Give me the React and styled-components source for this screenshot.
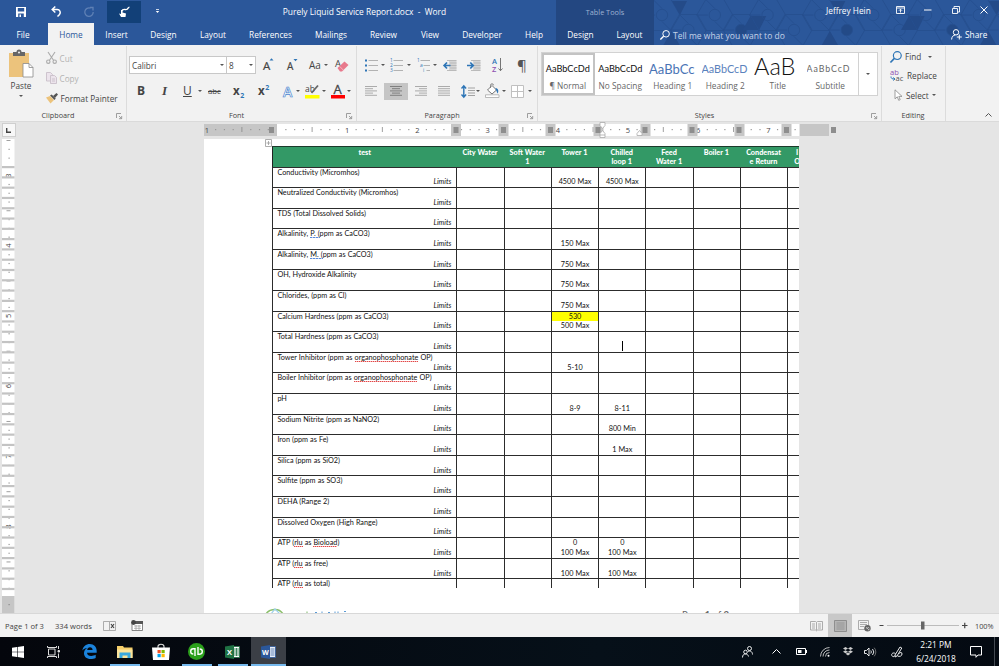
import styled, { createGlobalStyle, css } from 'styled-components';

const uiFont = '"Open Sans", "Noto Sans", sans-serif';
const docFont = 'Lato, "Open Sans", sans-serif';
const wordBlue = '#2b579a';
const contextBlue = '#234781';
const ribbonGray = '#f2f2f2';
const canvasGray = '#e5e5e5';
const iconGray = '#555';
const accentBlue = '#2e75b6';

const GlobalStyle = createGlobalStyle`
  * { box-sizing: border-box; }
  body {
    margin: 0;
    overflow: hidden;
    font-family: ${uiFont};
    font-size: 8.2px;
  }
  svg { display: block; flex: none; overflow: visible; }
`;

/* ---------- data ---------- */

const tabs = [
  { name: 'File', w: 46 },
  { name: 'Home', w: 46, active: true, gap: 2 },
  { name: 'Insert', w: 45 },
  { name: 'Design', w: 49 },
  { name: 'Layout', w: 50 },
  { name: 'References', w: 65 },
  { name: 'Mailings', w: 56 },
  { name: 'Review', w: 49 },
  { name: 'View', w: 44 },
  { name: 'Developer', w: 60 },
  { name: 'Help', w: 44 },
];

const columns = [
  ['test'],
  ['City Water'],
  ['Soft Water', '1'],
  ['Tower 1'],
  ['Chilled', 'loop 1'],
  ['Feed', 'Water 1'],
  ['Boiler 1'],
  ['Condensat', 'e Return'],
];

// tower / chilled hold [reading, limit]
const rows = [
  { name: 'Conductivity (Micromhos)', tower: ['', '4500 Max'], chilled: ['', '4500 Max'] },
  { name: 'Neutralized Conductivity (Micromhos)' },
  { name: 'TDS (Total Dissolved Solids)' },
  { name: ['Alkalinity, ', 'P. (', 'ppm as CaCO3)'], grammar: true, tower: ['', '150 Max'] },
  { name: ['Alkalinity, ', 'M. (', 'ppm as CaCO3)'], grammar: true, tower: ['', '750 Max'] },
  { name: 'OH, Hydroxide Alkalinity', tower: ['', '750 Max'] },
  { name: 'Chlorides, (ppm as Cl)', tower: ['', '750 Max'] },
  { name: 'Calcium Hardness (ppm as CaCO3)', tower: ['530', '500 Max'], alert: true },
  { name: 'Total Hardness (ppm as CaCO3)', cursor: true },
  { name: ['Tower Inhibitor (ppm as ', 'organophosphonate', ' OP)'], tower: ['', '5-10'] },
  { name: ['Boiler Inhibitor (ppm as ', 'organophosphonate', ' OP)'] },
  { name: 'pH', tower: ['', '8-9'], chilled: ['', '8-11'] },
  { name: 'Sodium Nitrite (ppm as NaNO2)', chilled: ['', '800 Min'] },
  { name: 'Iron (ppm as Fe)', chilled: ['', '1 Max'] },
  { name: 'Silica (ppm as SiO2)' },
  { name: 'Sulfite (ppm as SO3)' },
  { name: 'DEHA (Range 2)' },
  { name: 'Dissolved Oxygen (High Range)' },
  { name: ['ATP (', 'rlu', ' as ', 'Bioload', ')'], tower: ['0', '100 Max'], chilled: ['0', '100 Max'] },
  { name: ['ATP (', 'rlu', ' as free)'], tower: ['', '100 Max'], chilled: ['', '100 Max'] },
  { name: ['ATP (', 'rlu', ' as total)'], last: true },
];

/* ---------- title bar ---------- */

const Screen = styled.div`
  display: flex;
  flex-direction: column;
  width: 999px;
  height: 666px;
  overflow: hidden;
  background: ${canvasGray};
`;

const Header = styled.header`
  position: relative;
  height: 45px;
  background: ${wordBlue};
  color: #fff;
`;

const Pattern = styled.svg`
  position: absolute;
  top: 0;
  right: 0;
`;

const HeaderRow = styled.div`
  position: relative;
  display: flex;
  align-items: center;
  height: ${p => p.$h}px;
`;

const QuickButton = styled.div`
  display: flex;
  align-items: center;
  justify-content: center;
  width: ${p => p.$w}px;
  height: 22px;
  background: ${p => (p.$on ? '#124078' : 'transparent')};
`;

const DocTitle = styled.div`
  width: 383px;
  text-align: center;
  font-size: 8.42px;
  white-space: pre;
`;

const ContextTitle = styled.div`
  width: 98px;
  height: 23px;
  line-height: 24px;
  background: ${contextBlue};
  color: #9fb3d3;
  text-align: center;
  font-size: 7.3px;
`;

const UserName = styled.div`
  width: 232px;
  padding: 0 0 2px 172px;
  font-size: 8.3px;
  white-space: nowrap;
`;

const WindowButton = styled.div`
  display: flex;
  justify-content: center;
  width: 28px;
  padding-bottom: 3px;
`;

const Tab = styled.div`
  width: ${p => p.$w}px;
  height: 22px;
  margin-left: ${p => p.$gap || 0}px;
  line-height: 23px;
  text-align: center;
  white-space: nowrap;
  font-size: 8.3px;
  background: ${p => (p.$active ? ribbonGray : p.$context ? contextBlue : 'transparent')};
  color: ${p => (p.$active ? wordBlue : '#fff')};
`;

const TellMe = styled.div`
  display: flex;
  align-items: center;
  gap: 3px;
  width: 290px;
  padding: 2px 0 0 6px;
  color: #c5d2e8;
  font-size: 8.5px;
`;

const Share = styled.div`
  display: flex;
  align-items: center;
  gap: 3px;
  padding-left: 7px;
  font-size: 8.3px;
`;

/* ---------- ribbon ---------- */

const Ribbon = styled.div`
  display: flex;
  height: 77px;
  background: ${ribbonGray};
  border-bottom: 1px solid #dadada;
  color: #444;
`;

const Group = styled.section`
  display: flex;
  flex-direction: column;
  width: ${p => p.$w}px;
  height: 75px;
  margin-top: 1px;
  border-right: 1px solid #dcdcdc;
`;

const GroupBody = styled.div`
  flex: 1;
  padding: 8px 0 0 ${p => p.$left}px;
`;

const GroupLabel = styled.div`
  display: grid;
  grid-template-columns: 1fr 10px;
  height: 12px;
  line-height: 13px;
  padding-left: ${p => p.$left ?? 10}px;
  text-align: center;
  font-size: 7.25px;
  color: #444;
`;

const IconRow = styled.div`
  display: flex;
  align-items: center;
  height: 22px;
  margin-bottom: 4px;
`;

const Slot = styled.div`
  display: flex;
  align-items: center;
  flex: none;
  width: ${p => p.$w}px;
`;

const Glyph = styled.span`
  font-size: ${p => p.$size || 12}px;
  line-height: 14px;
  color: ${p => p.$color || '#444'};
  font-weight: ${p => (p.$bold ? 700 : 400)};
  font-style: ${p => (p.$italic ? 'italic' : 'normal')};
  font-family: ${p => (p.$serif ? '"Liberation Serif", serif' : uiFont)};
  text-decoration: ${p => p.$line || 'none'};

  sub, sup {
    margin-left: 0.5px;
    font-size: 7px;
    line-height: 0;
    color: ${accentBlue};
  }
`;

const Caret = styled.i`
  flex: none;
  border: 2px solid transparent;
  border-top: 2.4px solid #555;
  border-bottom: 0;
`;

const Combo = styled.div`
  display: flex;
  align-items: center;
  justify-content: space-between;
  width: ${p => p.$w}px;
  height: 18px;
  margin-right: ${p => p.$mr || 0}px;
  padding: 0 2px 0 2px;
  border: 1px solid #c8c8c8;
  background: #fff;
  color: #444;
`;

const ClipboardBody = styled.div`
  display: flex;
  flex: 1;
  padding-top: 3px;
`;

const PasteButton = styled.div`
  display: flex;
  flex-direction: column;
  align-items: center;
  width: 42px;
  padding-top: 1px;
  gap: 2px;

  span { margin-bottom: 2px; }
`;

const ClipList = styled.div`
  display: flex;
  flex-direction: column;
  margin-top: -1px;
  padding-left: 4px;
`;

const ClipItem = styled.div`
  display: flex;
  align-items: center;
  gap: 2.5px;
  height: 20px;
  white-space: nowrap;
  color: ${p => (p.$off ? '#b3b3b3' : '#444')};
`;

const SelectedButton = styled.div`
  display: flex;
  align-items: center;
  justify-content: center;
  flex: none;
  width: 24px;
  height: 17px;
  margin-right: 7px;
  background: #c5c5c5;
`;

const Gallery = styled.div`
  display: flex;
  width: 337px;
  height: 44px;
  margin-top: -2px;
  border: 1px solid #d2d2d2;
  background: #fff;
`;

const StyleTile = styled.div`
  display: flex;
  flex-direction: column;
  width: 52.5px;
  height: 42px;
  overflow: hidden;
  text-align: center;
  white-space: nowrap;
  color: #666;
  box-shadow: ${p => (p.$selected ? 'inset 0 0 0 2px #c3c3c3' : 'none')};

  span {
    height: 24px;
    margin: 3px 3px 0 2px;
    overflow: hidden;
    line-height: ${p => p.$lh || 26}px;
    font-size: ${p => p.$size}px;
    color: ${p => p.$color || '#111'};
    font-weight: ${p => p.$weight || 400};
    letter-spacing: ${p => p.$ls || 0}px;
    text-align: ${p => (p.$clip ? 'left' : 'center')};
    font-family: ${docFont};
  }

  em {
    margin-right: 1px;
    font-style: normal;
    font-size: 8.3px;
    line-height: 12px;
  }
`;

const GalleryMore = styled.div`
  display: flex;
  align-items: center;
  justify-content: center;
  margin-left: auto;
  width: 19px;
  border-left: 1px solid #d2d2d2;
`;

const EditItem = styled.div`
  display: flex;
  align-items: center;
  height: 19.3px;
  gap: 3px;
  white-space: nowrap;
`;

const RibbonEnd = styled.div`
  display: flex;
  flex: 1;
  align-items: flex-end;
  justify-content: flex-end;
  padding: 0 7px 4px 0;
`;

/* ---------- document ---------- */

const Workspace = styled.div`
  display: flex;
  height: 491px;
  padding-top: 1px;
`;

const SideRuler = styled.div`
  width: 204px;
`;

const TabSelector = styled.div`
  display: flex;
  align-items: center;
  justify-content: center;
  width: 14px;
  height: 14px;
  margin: 0 0 2px 1.5px;
  border: 1px solid #cfcfcf;
  background: #f7f7f7;
`;

const PageColumn = styled.div`
  display: flex;
  flex-direction: column;
`;

const Page = styled.main`
  position: relative;
  width: 595px;
  height: 474px;
  padding: 7px 0 0 68px;
  overflow: hidden;
  background: #fff;
  font-family: ${docFont};
`;

const MoveHandle = styled.svg`
  position: absolute;
  left: 61px;
  top: 0;
`;

const Table = styled.div`
  display: grid;
  grid-template-columns: 184.4px repeat(6, 47.25px) 47.25px 48px;
  grid-template-rows: 19.5px repeat(20, 20.6px) 9.5px;
  width: 563.15px;
  height: 442px;
  border-top: 1px solid #1c3a2b;
  color: #111;
  font-size: 7.25px;
  word-spacing: 0.2px;
`;

const HeadCell = styled.div`
  padding-top: 1px;
  background: #339966;
  border-left: ${p => (p.$first ? '1px solid #222' : 'none')};
  color: #fff;
  font-weight: 900;
  text-align: center;
  line-height: 9.3px;
  white-space: pre;
`;

const Cell = styled.div`
  display: flex;
  flex-direction: column;
  border-top: 1px solid #2c2c2c;
  border-left: 1px solid #2c2c2c;
  text-align: center;
  line-height: 10.2px;
  white-space: nowrap;
  overflow: hidden;

  > * {
    flex: none;
    height: 9.8px;
  }

  ${p => p.$name && css`
    padding: 0 5px 0 4.4px;
    text-align: left;
    white-space: pre;

    > em { text-align: right; }
  `}
`;

const Reading = styled.div`
  background: ${p => (p.$alert ? '#ff0' : 'transparent')};
`;

const Misspelt = styled.span`
  background: ${p =>
    p.$grammar
      ? 'repeating-linear-gradient(90deg, #5b8bd8 0 2px, #b9cdf0 2px 3px)'
      : 'repeating-linear-gradient(90deg, #e04848 0 1px, #f7b5b5 1px 2px)'} 0 100% / 100% 1px no-repeat;
`;

const TextCursor = styled.div`
  align-self: center;
  width: 1px;
  margin-top: -0.8px;
  background: #000;
`;

const PageFooter = styled.footer`
  position: absolute;
  left: 61px;
  right: 70px;
  bottom: -8px;
  display: flex;
  justify-content: space-between;
  height: 13px;
  color: #666;
  font-size: 9.5px;
  line-height: 13px;
`;

/* ---------- status bar and taskbar ---------- */

const StatusBar = styled.div`
  display: flex;
  align-items: center;
  height: 24px;
  padding-left: 5px;
  border-top: 1px solid #d8d8d8;
  background: ${ribbonGray};
  color: #444;
  font-size: 7.6px;
`;

const StatusItem = styled.div`
  display: flex;
  align-items: center;
  flex: none;
  width: ${p => p.$w}px;
  white-space: nowrap;
`;

const ViewButton = styled.div`
  display: flex;
  align-items: center;
  justify-content: center;
  flex: none;
  width: 24px;
  height: 23px;
  background: ${p => (p.$on ? '#c8c8c8' : 'transparent')};
`;

const Zoom = styled.div`
  display: flex;
  align-items: center;
  padding-left: 3px;

  span {
    margin-left: 7px;
    font-size: 7.3px;
  }
`;

const Taskbar = styled.div`
  display: flex;
  height: 29px;
  background: linear-gradient(90deg, #04060c, #061019 60%, #040a12);
  color: #fff;
`;

const TaskButton = styled.div`
  display: flex;
  align-items: center;
  justify-content: center;
  width: 35.8px;
  height: 29px;
  background: ${p => (p.$active ? '#3b3f46' : 'transparent')};
  box-shadow: ${p => (p.$open ? 'inset 0 -2px 0 #76b9ed' : 'none')};
  background-clip: content-box;
  border: solid transparent;
  border-width: 0 ${p => (p.$active ? 0 : 3)}px;
`;

const Tray = styled.div`
  display: flex;
  align-items: center;
  margin-left: auto;
`;

const TrayItem = styled.div`
  display: flex;
  justify-content: center;
  width: ${p => p.$w}px;
`;

const Clock = styled.div`
  width: 52px;
  font-size: 8.4px;
  line-height: 13.3px;
  text-align: center;
`;

/* ---------- icons ---------- */

const Launcher = () => (
  <svg width="7" height="7" viewBox="0 0 7 7" fill="none" stroke="#888" style={{ marginTop: 4 }}>
    <path d="M.5 5V.5H5M3 3l2.500 2.500M5.700 3v2.700H3" strokeWidth=".8" />
  </svg>
);

const PasteIcon = () => (
  <svg width="26" height="28" viewBox="0 0 26 28">
    <path d="M1 3h20v24H1z" fill="#ecc37c" />
    <path d="M5 2h3.500a2.500 2.500 0 0 1 5 0H17v4H5z" fill="#666" />
    <circle cx="11" cy="2.600" r="1" fill="#f2f2f2" />
    <path d="M15 13.500h6l4 4V27H15z" fill="#fff" stroke="#8a8a8a" strokeWidth=".8" />
    <path d="M21 13.500v4h4" fill="none" stroke="#8a8a8a" strokeWidth=".8" />
  </svg>
);

const CutIcon = () => (
  <svg width="11" height="12" viewBox="0 0 11 12" fill="none" stroke="#aaa" strokeWidth="1.100">
    <path d="M2 0l5.500 8.200M9 0L3.500 8.200" />
    <circle cx="2.300" cy="9.700" r="1.700" />
    <circle cx="8.700" cy="9.700" r="1.700" />
  </svg>
);

const CopyIcon = () => (
  <svg width="11" height="12" viewBox="0 0 11 12" fill="#ece4ec" stroke="#c9bfca" strokeWidth=".9">
    <path d="M.5.5h4l2 2V9h-6z" />
    <path d="M4.500 3.500h4l2 2V11.500h-6z" />
    <path d="M6 7h3M6 9h3" />
  </svg>
);

const PainterIcon = () => (
  <svg width="12" height="11" viewBox="0 0 12 11">
    <path d="M0 4.500l4-1.500 4 4-3.500 3.500z" fill="#ecc37c" />
    <path d="M4 2.500l1.700-1 4 4-1.200 1.500z" fill="#555" />
    <path d="M7 3l3.500-3L12 1.500 9 5z" fill="#555" />
  </svg>
);

const EraserIcon = () => (
  <svg width="14" height="14" viewBox="0 0 14 14">
    <text x="0" y="9" fontSize="9.5" fill="#444">A</text>
    <path d="M2.500 10L9.500 3.500l4 3.500-6.500 6.500H5z" fill="#e8798c" />
    <path d="M4.500 8.200l4.200 4.300" stroke="#f7c4cc" strokeWidth=".8" />
  </svg>
);

const GrowIcon = ({ down }) => (
  <svg width="12" height="14" viewBox="0 0 12 14">
    <text x="0" y="12" fontSize={down ? 10 : 11.5} fill="#444" stroke="#444" strokeWidth=".2">A</text>
    <path d={down ? 'M6.500 1h4L8.500 3.200z' : 'M6.500 2.500h4L8.500.3z'} fill={accentBlue} />
  </svg>
);

const EffectIcon = () => (
  <svg width="12" height="13" viewBox="0 0 12 13">
    <text x="0" y="11.500" fontSize="14" fontWeight="600" fill="#fff" stroke="#4a86cf" strokeWidth=".7">A</text>
  </svg>
);

const HighlightIcon = () => (
  <svg width="15" height="15" viewBox="0 0 15 15">
    <text x="0" y="8" fontSize="8.500" fill="#444">ab</text>
    <path d="M13 1.500L6.500 9" stroke="#666" strokeWidth="1.800" />
    <path d="M0 11h14.500v3.500H0z" fill="#ff0" />
  </svg>
);

const FontColorIcon = () => (
  <svg width="13" height="15" viewBox="0 0 13 15">
    <text x="1.500" y="10" fontSize="13" fill="#444" stroke="#444" strokeWidth=".3">A</text>
    <path d="M-1 11h14v3.500H-1z" fill="red" />
  </svg>
);

const ListIcon = ({ kind }) => (
  <svg width="13" height="13" viewBox="0 0 13 13">
    {[1.500, 6.500, 11.500].map((y, i) => (
      <g key={y}>
        {kind === 'bullet' && <rect x="0" y={y - 1} width="2" height="2" fill={accentBlue} />}
        {kind === 'number' && <text x="0" y={y + 1.500} fontSize="4.800" fill={accentBlue}>{i + 1}</text>}
        {kind === 'multi' && <text x={i * 3} y={y + 1.500} fontSize="4.800" fill={accentBlue}>{'1ai'[i]}</text>}
        <path d={`M${kind === 'multi' ? 3.500 + i * 3 : 3.500} ${y}H13`} stroke="#aaa" strokeWidth=".9" />
      </g>
    ))}
  </svg>
);

const IndentIcon = ({ out }) => (
  <svg width="14" height="11" viewBox="0 0 14 11">
    <path d="M6 .5h7.500v10H6z" fill="#d5d5d5" />
    <path d="M4 .5h9.500M7 3h6.500M7 5.500h6.500M7 8h6.500M4 10.500h9.500" stroke="#b5b5b5" strokeWidth=".9" />
    <path
      d={out ? 'M7.500 5.500H1.500M4 2.500L1.100 5.500 4 8.500' : 'M0 5.500h6M3.300 2.500l2.900 3-2.900 3'}
      fill="none" stroke={accentBlue} strokeWidth="1.700"
    />
  </svg>
);

const SortIcon = () => (
  <svg width="12" height="14" viewBox="0 0 12 14">
    <text x="0" y="6.200" fontSize="7.500" fontWeight="600" fill={accentBlue}>A</text>
    <text x="0" y="13.500" fontSize="7.500" fontWeight="600" fill="#8e4fb0">Z</text>
    <path d="M8.500 0v12.500M6.500 10.500l2 2.200 2-2.200" fill="none" stroke="#666" strokeWidth=".9" />
  </svg>
);

const AlignIcon = ({ kind }) => {
  const start = { left: [0, 0], center: [0, 2], right: [0, 4], full: [0, 0] }[kind];
  const width = kind === 'full' ? [12, 12] : [12, 8];
  return (
    <svg width="12" height="10" viewBox="0 0 12 10" stroke={kind === 'center' ? '#777' : '#a3a3a3'} strokeWidth=".9">
      {[0.500, 2.700, 4.900, 7.100, 9.300].map((y, i) => (
        <path key={y} d={`M${start[i % 2]} ${y}h${width[i % 2]}`} />
      ))}
    </svg>
  );
};

const SpacingIcon = () => (
  <svg width="14" height="13" viewBox="0 0 14 13">
    <path d="M2.800 1v11M.5 3.500l2.300-2.700 2.300 2.700M.5 9.500l2.300 2.700 2.300-2.700" fill="none" stroke={accentBlue} strokeWidth="1.400" />
    <path d="M7 3h7M7 5.500h7M7 8h7M7 10.500h7" stroke="#999" strokeWidth=".9" />
  </svg>
);

const ShadingIcon = () => (
  <svg width="15" height="14" viewBox="0 0 15 14">
    <path d="M2.500 6l4.500-4.500L11.500 6 7 10z" fill="#fff" stroke="#777" />
    <path d="M5.500 4V1.300a1.500 1.500 0 0 1 3 0" fill="none" stroke="#777" strokeWidth=".9" />
    <path d="M10.500 4c3 .5 3.300 3 2.300 5.500-1-1-.9-2.500-2-3.500z" fill={accentBlue} />
    <path d="M.5 10.800h13.500v2.700H.5z" fill="#fff" stroke="#aaa" strokeWidth=".8" />
  </svg>
);

const BordersIcon = () => (
  <svg width="13" height="13" viewBox="0 0 13 13" fill="#fff" stroke="#c0c0c0">
    <path d="M.5.5h12v12H.5zM6.500.5v12M.5 6.500h12" />
  </svg>
);

const SearchIcon = ({ color, size = 11 }) => (
  <svg width={size} height={size} viewBox="0 0 11 11" fill="none" stroke={color} strokeWidth="1.100">
    <circle cx="6.700" cy="4.200" r="3.600" />
    <path d="M4 6.800L.4 10.500" strokeWidth="1.500" />
  </svg>
);

const ReplaceIcon = () => (
  <svg width="14" height="13" viewBox="0 0 14 13">
    <text x="0" y="5.500" fontSize="7.500" fill="#8e4fb0">ab</text>
    <text x="5.500" y="12" fontSize="7.500" fill="#555">ac</text>
    <path d="M1 7.500c0 2 1 2.500 3.500 2.500M3.300 8.500L5 10l-1.700 1.500" fill="none" stroke={accentBlue} />
  </svg>
);

const PointerIcon = () => (
  <svg width="9" height="12" viewBox="0 0 9 12">
    <path d="M1 .8v9l2.300-2 1.400 3.500 1.500-.6-1.400-3.300H8z" fill="#fff" stroke="#888" strokeWidth=".8" />
  </svg>
);

const PersonIcon = () => (
  <svg width="11" height="11" viewBox="0 0 11 11" fill="none" stroke="#fff">
    <circle cx="5" cy="3.300" r="2.700" />
    <path d="M.6 10.500c.2-3 1.700-4.300 3.700-4.500M8.300 5.500v5M5.800 8h5" />
  </svg>
);

const UndoIcon = () => (
  <svg width="11" height="11" viewBox="0 0 11 11" fill="none" stroke="#fff" strokeWidth="1.500">
    <path d="M4.300.5L1.200 3.500l3.100 3M1.500 3.500h4.700a3 3 0 0 1 2.300 5L6.500 10.500" />
  </svg>
);

const Honeycomb = () => {
  const cells = [];
  for (let i = 0; i < 15; i += 1) {
    cells.push({ x: 6 + i * 26.400, y: i % 2 ? 30 : 15, dark: i % 4 === 3 });
  }
  return (
    <Pattern width="345" height="45" viewBox="14 0 345 45" style={{ overflow: 'hidden' }}>
      {cells.map(({ x, y, dark }, i) => (
        <g key={x} stroke="#264f8f" fill="none" strokeWidth=".9">
          <circle cx={x + 16} cy={y} r="5.700" fill={dark ? '#234a87' : 'none'} />
          <path d={`M${x + 7} ${y - 15.500}h18l9 15.500-9 15.500h-18l-9-15.500z`} />
          <path d={`M${x + 25} ${y + 15.500}l-9-9M${x + 7} ${y - 15.500}l9 9M${x - 2} ${y}h11`} />
          {i % 3 === 0 && <path d={`M${x + 34} ${y}l-8-14h15z`} fill="#244b89" stroke="none" />}
          {i % 3 === 1 && <path d={`M${x + 7} ${y + 15}l-8-14-8 14z`} fill="#244b89" stroke="none" />}
        </g>
      ))}
    </Pattern>
  );
};

/* ---------- rulers ---------- */

const TopRuler = () => {
  const ticks = [];
  for (let n = -7; n < 60; n += 1) {
    const x = 73 + n * 8.780;
    if (n % 8 === 0 || x > 594) continue;
    ticks.push(n % 4 === 0
      ? <path key={n} d={`M${x} 4v5`} stroke="#888" strokeWidth=".8" />
      : <rect key={n} x={x - 0.500} y="6" width="1.200" height="1.200" fill="#999" />);
  }
  return (
    <svg width="640" height="16" viewBox="0 0 640 16">
      <path d="M0 1h595v12H0z" fill="#fff" />
      <path d="M0 1h73v12H0zM596 1h29v12h-29z" fill="#c6c6c6" />
      {ticks}
      <g fontSize="7.500" fill="#444" textAnchor="middle">
        <text x="3" y="9.500">1</text>
        {[1, 2, 3, 4, 5, 6, 7].map(n => (
          <text key={n} x={73 + n * 70.200} y="9.500">{n}</text>
        ))}
      </g>
      {[251.500, 299, 346, 394, 441, 488, 535, 582].map(x => (
        <rect key={x} x={x - 4.500} y="1" width="10" height="12" fill="#c6c6c6" />
      ))}
      {[67.500, 252, 299.500, 346.500, 394, 441, 488, 535, 582.500, 629.500].map(x => (
        <rect key={x} x={x - 2.500} y="4" width="5" height="6" fill="#8e8e8e" />
      ))}
      <g fill="#fff" stroke="#aaa" strokeWidth=".8">
        <path d="M396 -.5h5v3l-2.500 3-2.500-3zM396 14.500v-4l2.500-3 2.500 3v4zM396 12h5M433 12.500v-2l2.500-3 2.500 3v2z" />
      </g>
    </svg>
  );
};

const LeftRuler = () => (
  <svg width="16" height="474" viewBox="0 0 16 474" style={{ overflow: 'hidden' }}>
    <path d="M2 0h12.500v474H2z" fill="#fff" />
    {Array.from({ length: 53 }, (_, n) => {
      const y = 1 + n * 8.780;
      if (n % 8 === 4) return null;
      return n % 4 === 0
        ? <path key={n} d={`M6.500 ${y + 0.500}h4`} stroke="#888" strokeWidth=".8" />
        : <rect key={n} x="8.500" y={y} width="1.200" height="1.200" fill="#999" />;
    })}
    {[3, 4, 5, 6, 7, 8].map((n, i) => (
      <text key={n} transform={`translate(11 ${36.500 + i * 70.200}) rotate(-90)`} textAnchor="middle" fontSize="7.500" fill="#444">{n}</text>
    ))}
    {Array.from({ length: 42 }, (_, k) => (
      <rect key={k} x="2" y={27 + k * 10.290} width="12.500" height="2.200" fill="#c3c3c3" />
    ))}
    <path d="M2 457h12.500v17H2z" fill="#c6c6c6" />
    <rect x="8.500" y="465" width="1.200" height="1.200" fill="#888" />
  </svg>
);

/* ---------- sections ---------- */

const TitleBar = () => (
  <Header>
    <Honeycomb />
    <HeaderRow $h={23}>
      <QuickButton $w={42}>
        <svg width="10" height="10" viewBox="0 0 10 10" fill="#fff">
          <path fillRule="evenodd" d="M0 0h10v10H0zM1.800 1v3.500h6.400V1zM2.200 6.500V10h1.300V7.500h1.500V10h2.800V6.500z" />
        </svg>
      </QuickButton>
      <QuickButton $w={28}><UndoIcon /></QuickButton>
      <QuickButton $w={37}>
        <svg width="10" height="10" viewBox="0 0 10 10" fill="none" stroke="#5f80b5" strokeWidth="1.300">
          <path d="M6.500 1.200A4.200 4.200 0 1 0 9.200 5M6 .5h3v3" />
        </svg>
      </QuickButton>
      <QuickButton $w={34} $on>
        <svg width="12" height="12" viewBox="0 0 12 12" fill="none" stroke="#fff">
          <path d="M3.500 5.500C5 2 7 4 8.500 3.500s1.500-2 3-2.500" strokeWidth="1.300" />
          <path d="M3 4v4L1 7.500 3 11h4.500L8 7.500 4.500 6.500V4z" fill="#fff" stroke="none" />
        </svg>
      </QuickButton>
      <QuickButton $w={32}>
        <svg width="5" height="5" viewBox="0 0 5 5"><path d="M1 0h3v.8H1zM.8 2h3.400L2.500 4z" fill="#fff" /></svg>
      </QuickButton>
      <DocTitle>{'Purely Liquid Service Report.docx  -  Word'}</DocTitle>
      <ContextTitle>Table Tools</ContextTitle>
      <UserName>Jeffrey Hein</UserName>
      <WindowButton>
        <svg width="9" height="8" viewBox="0 0 9 8" fill="none" stroke="#fff" strokeWidth=".9">
          <path d="M.5.5h8v7h-8zM.5 2h8M4.500 6.500V3.300M3 4.700l1.500-1.500L6 4.700" />
        </svg>
      </WindowButton>
      <WindowButton>
        <svg width="8" height="8" viewBox="0 0 8 8"><path d="M0 4h7.500" stroke="#fff" /></svg>
      </WindowButton>
      <WindowButton>
        <svg width="8" height="8" viewBox="0 0 8 8" fill="none" stroke="#fff" strokeWidth=".9">
          <path d="M.5 2.500h5v5h-5zM2 2.500v-2h5.500v5.500H5.700" />
        </svg>
      </WindowButton>
      <WindowButton>
        <svg width="8" height="8" viewBox="0 0 8 8"><path d="M.5.5l7 7M7.500.5l-7 7" stroke="#fff" /></svg>
      </WindowButton>
    </HeaderRow>
    <HeaderRow $h={22}>
      {tabs.map(t => (
        <Tab key={t.name} $w={t.w} $gap={t.gap} $active={t.active}>{t.name}</Tab>
      ))}
      <Tab $w={49} $context>Design</Tab>
      <Tab $w={49} $context>Layout</Tab>
      <TellMe><SearchIcon color="#fff" size={10} />Tell me what you want to do</TellMe>
      <Share><PersonIcon />Share</Share>
    </HeaderRow>
  </Header>
);

const ClipboardGroup = () => (
  <Group $w={127}>
    <ClipboardBody>
      <PasteButton>
        <PasteIcon />
        <span>Paste</span>
        <Caret />
      </PasteButton>
      <ClipList>
        <ClipItem $off><CutIcon />Cut</ClipItem>
        <ClipItem $off><CopyIcon />Copy</ClipItem>
        <ClipItem><PainterIcon />Format Painter</ClipItem>
      </ClipList>
    </ClipboardBody>
    <GroupLabel $left={0}><span>Clipboard</span><Launcher /></GroupLabel>
  </Group>
);

const FontGroup = () => (
  <Group $w={230}>
    <GroupBody $left={2}>
      <IconRow>
        <Combo $w={98} $mr={-1}>Calibri<Caret /></Combo>
        <Combo $w={30} $mr={7}>8<Caret /></Combo>
        <Slot $w={24}><GrowIcon /></Slot>
        <Slot $w={22}><GrowIcon down /></Slot>
        <Slot $w={15}><Glyph $size={10}>Aa</Glyph></Slot>
        <Slot $w={11}><Caret /></Slot>
        <EraserIcon />
      </IconRow>
      <IconRow>
        <Slot $w={8} />
        <Slot $w={25}><Glyph $size={12} $bold>B</Glyph></Slot>
        <Slot $w={21}><Glyph $size={13} $italic $serif $bold>I</Glyph></Slot>
        <Slot $w={15}><Glyph $size={12} $line="underline">U</Glyph></Slot>
        <Slot $w={10}><Caret /></Slot>
        <Slot $w={25}><Glyph $size={7.800} $line="line-through">abc</Glyph></Slot>
        <Slot $w={25}><Glyph $size={11.500} $bold>x<sub>2</sub></Glyph></Slot>
        <Slot $w={25}><Glyph $size={11.500} $bold>x<sup>2</sup></Glyph></Slot>
        <Slot $w={13}><EffectIcon /></Slot>
        <Slot $w={9}><Caret /></Slot>
        <Slot $w={17}><HighlightIcon /></Slot>
        <Slot $w={10}><Caret /></Slot>
        <Slot $w={15}><FontColorIcon /></Slot>
        <Caret />
      </IconRow>
    </GroupBody>
    <GroupLabel $left={0}><span>Font</span><Launcher /></GroupLabel>
  </Group>
);

const ParagraphGroup = () => (
  <Group $w={181}>
    <GroupBody $left={8}>
      <IconRow>
        <Slot $w={16}><ListIcon kind="bullet" /></Slot>
        <Slot $w={9}><Caret /></Slot>
        <Slot $w={17}><ListIcon kind="number" /></Slot>
        <Slot $w={10}><Caret /></Slot>
        <Slot $w={16}><ListIcon kind="multi" /></Slot>
        <Slot $w={10}><Caret /></Slot>
        <Slot $w={24}><IndentIcon out /></Slot>
        <Slot $w={25}><IndentIcon /></Slot>
        <Slot $w={25}><SortIcon /></Slot>
        <Glyph $size={15} $color={iconGray}>¶</Glyph>
      </IconRow>
      <IconRow>
        <Slot $w={19}><AlignIcon kind="left" /></Slot>
        <SelectedButton><AlignIcon kind="center" /></SelectedButton>
        <Slot $w={23}><AlignIcon kind="right" /></Slot>
        <Slot $w={23}><AlignIcon kind="full" /></Slot>
        <Slot $w={15}><SpacingIcon /></Slot>
        <Slot $w={9}><Caret /></Slot>
        <Slot $w={17}><ShadingIcon /></Slot>
        <Slot $w={9}><Caret /></Slot>
        <Slot $w={17}><BordersIcon /></Slot>
        <Caret />
      </IconRow>
    </GroupBody>
    <GroupLabel $left={0}><span>Paragraph</span><Launcher /></GroupLabel>
  </Group>
);

const StylesGroup = () => (
  <Group $w={344}>
    <GroupBody $left={3}>
      <Gallery>
        <StyleTile $size={9.200} $selected><span>AaBbCcDd</span><em>¶ Normal</em></StyleTile>
        <StyleTile $size={9.200}><span>AaBbCcDd</span><em>No Spacing</em></StyleTile>
        <StyleTile $size={13} $color="#4a74b5" $clip><span>AaBbCc</span><em>Heading 1</em></StyleTile>
        <StyleTile $size={10.800} $color="#5b82bd" $clip><span>AaBbCcD</span><em>Heading 2</em></StyleTile>
        <StyleTile $size={23.500} $lh={20} $weight={300} $clip><span>AaB</span><em>Title</em></StyleTile>
        <StyleTile $size={8.800} $color="#666" $ls={0.950} $clip><span>AaBbCcD</span><em>Subtitle</em></StyleTile>
        <GalleryMore><Caret /></GalleryMore>
      </Gallery>
    </GroupBody>
    <GroupLabel $left={0}><span>Styles</span><Launcher /></GroupLabel>
  </Group>
);

const EditingGroup = () => (
  <Group $w={64}>
    <GroupBody $left={8} style={{ paddingTop: 1 }}>
      <EditItem><SearchIcon color={accentBlue} size={12} />Find<Slot $w={1} /><Caret /></EditItem>
      <EditItem><ReplaceIcon />Replace</EditItem>
      <EditItem><Slot $w={1} /><PointerIcon />Select<Caret /></EditItem>
    </GroupBody>
    <GroupLabel $left={9}><span>Editing</span></GroupLabel>
  </Group>
);

const RowLabel = ({ name, grammar }) => (
  <div>
    {Array.isArray(name)
      ? name.map((part, i) => (i % 2 ? <Misspelt key={i} $grammar={grammar}>{part}</Misspelt> : part))
      : name}
  </div>
);

const Values = ({ pair = [], alert }) => (
  <Cell>
    <Reading $alert={alert}>{pair[0]}</Reading>
    <div>{pair[1]}</div>
  </Cell>
);

const TestTable = () => (
  <Table>
    {columns.map((lines, i) => (
      <HeadCell key={lines[0]} $first={i === 0}>{lines.join('\n')}</HeadCell>
    ))}
    <HeadCell style={{ textAlign: 'left', paddingLeft: 7 }}>{' I\nO'}</HeadCell>
    {rows.map((row, i) => [
      <Cell key={i} $name>
        <RowLabel name={row.name} grammar={row.grammar} />
        {!row.last && <em>Limits</em>}
      </Cell>,
      <Values key={`${i}-city`} />,
      <Values key={`${i}-soft`} />,
      <Values key={`${i}-tower`} pair={row.tower} alert={row.alert} />,
      row.cursor
        ? <Cell key={`${i}-chilled`}><Reading /><TextCursor /></Cell>
        : <Values key={`${i}-chilled`} pair={row.chilled} />,
      <Values key={`${i}-feed`} />,
      <Values key={`${i}-boiler`} />,
      <Values key={`${i}-return`} />,
      <Values key={`${i}-extra`} />,
    ])}
  </Table>
);

const DocumentArea = () => (
  <Workspace>
    <SideRuler>
      <TabSelector>
        <svg width="5" height="5" viewBox="0 0 5 5"><path d="M.7 0v4.200H5" fill="none" stroke="#444" strokeWidth="1.400" /></svg>
      </TabSelector>
      <LeftRuler />
    </SideRuler>
    <PageColumn>
      <TopRuler />
      <Page>
        <MoveHandle width="7" height="8" viewBox="0 0 7 8" fill="#fff" stroke="#999" strokeWidth=".8">
          <path d="M.5.5h6v7h-6zM3.500 2v4M1.500 4h4" />
        </MoveHandle>
        <TestTable />
        <PageFooter>
          <svg width="90" height="13" viewBox="0 0 90 13" fill="none">
            <path d="M1 6C4 1 14-1 18 6" stroke="#8cc06c" strokeWidth="1.500" />
            <path d="M6 6l4-5 5 5" stroke="#9bd0ee" strokeWidth="1.200" />
            <path d="M42 3.500v2" stroke="#7fb86a" />
            <path d="M50 4.500h2M57 3.500v2M63 4.500h2M70 3.500v2M73 3.500v2M79 3.500h2" stroke="#5b9bd5" />
          </svg>
          <span>Page <b>1</b> of <b>3</b></span>
        </PageFooter>
      </Page>
    </PageColumn>
  </Workspace>
);

const Status = () => (
  <StatusBar>
    <StatusItem $w={50}>Page 1 of 3</StatusItem>
    <StatusItem $w={48}>334 words</StatusItem>
    <StatusItem $w={28}>
      <svg width="13" height="10" viewBox="0 0 13 10" fill="none" stroke="#999" strokeWidth=".8">
        <path d="M.5.5h6v9h-6zM6.500.5h6v9h-6" />
        <path d="M8 3l3 4M11 3L8 7" stroke="#444" strokeWidth="1.200" />
      </svg>
    </StatusItem>
    <StatusItem $w={673}>
      <svg width="12" height="11" viewBox="0 0 12 11">
        <path d="M1 2.500h10.500v8H1z" fill="#fff" stroke="#777" strokeWidth=".9" />
        <path d="M4 1h8v3H4z" fill="#555" />
        <circle cx="2.500" cy="2.500" r="2.400" fill="#444" />
        <path d="M3 6h7M3 8.300h7M5 5v5M8 5v5" stroke="#999" strokeWidth=".7" />
      </svg>
    </StatusItem>
    <ViewButton>
      <svg width="13" height="10" viewBox="0 0 13 10" fill="none" stroke="#999" strokeWidth=".8">
        <path d="M.5.5h5l1 .8 1-.8h5v8.500h-5l-1 .8-1-.8h-5zM6.500 1.500v8M2 3h3M2 5h3M2 7h3M8 3h3M8 5h3M8 7h3" />
      </svg>
    </ViewButton>
    <ViewButton $on>
      <svg width="13" height="12" viewBox="0 0 13 12" fill="#b5b5b5" stroke="#888" strokeWidth=".9">
        <path d="M.5.5h12v11H.5z" />
        <path d="M2.500 3h8M2.500 5h8M2.500 7h8M2.500 9h8" strokeWidth=".7" />
      </svg>
    </ViewButton>
    <ViewButton>
      <svg width="13" height="12" viewBox="0 0 13 12" fill="none" stroke="#999" strokeWidth=".8">
        <path d="M.5.5h10v9H.5zM2 2.500h7M2 4.500h7M2 6.500h4" />
        <circle cx="9.500" cy="8.200" r="3.200" fill="#666" stroke="none" />
        <path d="M8 7.500l1.500 1 1-1.500M10 10l1.500-1" stroke="#eee" />
      </svg>
    </ViewButton>
    <Zoom>
      <svg width="89" height="9" viewBox="0 0 89 9">
        <path d="M.5 4.500h4M83 4.500h5.500M85.750 1.700v5.600" stroke="#444" strokeWidth="1.200" />
        <path d="M8 4.500h72" stroke="#b5b5b5" strokeWidth=".9" />
        <rect x="42" y=".5" width="3.500" height="8" fill="#666" />
      </svg>
      <span>100%</span>
    </Zoom>
  </StatusBar>
);

const WindowsTaskbar = () => (
  <Taskbar>
    <TaskButton>
      <svg width="12" height="12" viewBox="0 0 12 12" fill="#fff">
        <path d="M0 1.700L5 1v4.700H0zM5.600.9L12 0v5.700H5.600zM0 6.300h5V11l-5-.7zM5.600 6.300H12V12l-6.400-.9z" />
      </svg>
    </TaskButton>
    <TaskButton>
      <svg width="13" height="12" viewBox="0 0 13 12" fill="none" stroke="#ddd">
        <path d="M1.500 3h6.500v6H1.500zM.5 0v1.500h9V0M.5 12v-1.500h9V12M11.500 0v3M11.500 7.500V12" />
        <path d="M11 4.500h1.500v1.500H11z" fill="#ddd" />
      </svg>
    </TaskButton>
    <TaskButton>
      <svg width="15" height="15" viewBox="0 0 15 15">
        <path d="M.3 6.600C1 2.500 4 0 7.800 0 12 0 14.700 3 14.700 7v1.700H5c.2 2.400 2 3.300 4.200 3.300 1.700 0 3.200-.5 4.500-1.200v3.100c-1.500.8-3.200 1.100-5 1.100C4.500 15 2 12.600 2 9.200c0-2.300 1-4.200 3.200-5.300C3.200 4 1.500 5 .3 6.600zM5.200 6h5.400c-.1-1.800-1-2.700-2.600-2.700S5.500 4.300 5.200 6z" fill="#1b83dc" />
      </svg>
    </TaskButton>
    <TaskButton $open>
      <svg width="16" height="14" viewBox="0 0 16 14">
        <path d="M0 1h6l1 1.500h8.500V13H0z" fill="#f5cf6b" />
        <path d="M0 4.500h15.500V13H0z" fill="#fbe39b" />
        <path d="M2.500 7.500h11V13h-3v-2.500h-5V13h-3z" fill="#39a8e0" />
      </svg>
    </TaskButton>
    <TaskButton>
      <svg width="18" height="16" viewBox="0 0 18 16">
        <path d="M6 5V2.500a3 2.200 0 0 1 6 0V5" fill="none" stroke="#ddd" strokeWidth="1.100" />
        <path d="M0 3.500h18L17 16H1z" fill="#fff" />
        <path d="M5.500 6h3.200v3.200H5.500z" fill="#f25022" /><path d="M9.500 6h3.200v3.200H9.500z" fill="#7fba00" />
        <path d="M5.500 10h3.200v3.200H5.500z" fill="#00a4ef" /><path d="M9.500 10h3.200v3.200H9.500z" fill="#ffb900" />
      </svg>
    </TaskButton>
    <TaskButton $open>
      <svg width="17" height="17" viewBox="0 0 17 17">
        <circle cx="8.500" cy="8.500" r="8.500" fill="#2ca01c" />
        <g fill="none" stroke="#fff" strokeWidth="1.400">
          <path d="M7 13V5.800H5.300a2.500 2.500 0 0 0 0 5.200M10 4v7.200h1.700a2.500 2.500 0 0 0 0-5.200" />
        </g>
      </svg>
    </TaskButton>
    <TaskButton $open>
      <svg width="15" height="14" viewBox="0 0 15 14">
        <path d="M8 1.500h6.500v11H8z" fill="#fff" stroke="#1f7244" strokeWidth=".8" />
        <path d="M9 4h5M9 6h5M9 8h5M9 10h5M11.500 3v8" stroke="#1f7244" strokeWidth=".8" />
        <path d="M0 1.500L9 0v14l-9-1.500z" fill="#1f7244" />
        <text x="2" y="9.800" fontSize="7.500" fontWeight="700" fill="#fff">X</text>
      </svg>
    </TaskButton>
    <TaskButton $open $active>
      <svg width="15" height="14" viewBox="0 0 15 14">
        <path d="M8 1.500h6.500v11H8z" fill="#e8eef8" stroke="#2b579a" strokeWidth=".8" />
        <path d="M9.500 4h4M9.500 6h4M9.500 8h4M9.500 10h4" stroke="#2b579a" strokeWidth=".7" />
        <path d="M0 1.500L9 0v14l-9-1.500z" fill="#2b579a" />
        <text x="1" y="9.500" fontSize="7" fontWeight="700" fill="#fff">W</text>
      </svg>
    </TaskButton>
    <Tray>
      <TrayItem $w={27}>
        <svg width="11" height="12" viewBox="0 0 11 12" fill="none" stroke="#fff" strokeWidth=".9">
          <circle cx="7.500" cy="2.500" r="2" /><circle cx="3.500" cy="6" r="1.800" />
          <path d="M.5 11.500c0-2.500 1.300-3.500 3-3.500s2.700 1 3 2.500M6 5.500c2.500-1.500 4.500.5 4.500 3" />
        </svg>
      </TrayItem>
      <TrayItem $w={30}>
        <svg width="9" height="5" viewBox="0 0 9 5"><path d="M.5 4.500l4-4 4 4" fill="none" stroke="#fff" /></svg>
      </TrayItem>
      <TrayItem $w={20}>
        <svg width="11" height="7" viewBox="0 0 11 7">
          <path d="M.5.5h9v6h-9z" fill="none" stroke="#fff" /><path d="M2 2h3.500v3H2zM10 2h1v3h-1z" fill="#fff" />
        </svg>
      </TrayItem>
      <TrayItem $w={27}>
        <svg width="10" height="10" viewBox="0 0 10 10" fill="none" stroke="#ccc" strokeWidth=".9">
          <path d="M.5 9.500A9 9 0 0 1 9.500.5M3 9.500a6.500 6.500 0 0 1 6.500-6.500M5.500 9.500a4 4 0 0 1 4-4" />
          <circle cx="8.500" cy="8.700" r="1" fill="#fff" stroke="none" />
        </svg>
      </TrayItem>
      <TrayItem $w={19}>
        <svg width="10" height="9" viewBox="0 0 10 9" fill="#ccc">
          <path d="M2.500 0L5 1.500 2.500 3 0 1.500zM7.500 0L10 1.500 7.500 3 5 1.500zM2.500 3.200L5 4.700 2.500 6.200 0 4.700zM7.500 3.200L10 4.700 7.500 6.200 5 4.700zM2.500 6.800L5 5.500l2.500 1.300L5 8.500z" />
        </svg>
      </TrayItem>
      <TrayItem $w={26}>
        <svg width="12" height="10" viewBox="0 0 12 10" fill="none" stroke="#fff" strokeWidth=".9">
          <path d="M.5 3.500h2L5 1v8L2.500 6.500h-2zM6.800 3.500a2.500 2.500 0 0 1 0 3M8.500 2a4.500 4.500 0 0 1 0 6" />
          <path d="M10.200.7a6.500 6.500 0 0 1 0 8.600" stroke="#777" />
        </svg>
      </TrayItem>
      <TrayItem $w={27}>
        <svg width="12" height="12" viewBox="0 0 12 12" fill="none" stroke="#fff" strokeWidth=".9">
          <path d="M4 9l5-8 1.800 1L6 10l-2 1zM4.500 7.500C2 6 0 8 .8 9.500S3 11 4 9.500M6.500 10c2 1 4.500 0 4.500-2S9.500 6 8 7.500" />
        </svg>
      </TrayItem>
      <Clock>2:21 PM<br />6/24/2018</Clock>
      <TrayItem $w={28}>
        <svg width="12" height="12" viewBox="0 0 12 12" fill="none" stroke="#fff">
          <path d="M.5.5h11v8.500H8L6 11.300V9H.5z" />
        </svg>
      </TrayItem>
      <TrayItem $w={9}>
        <svg width="1" height="29" viewBox="0 0 1 29"><path d="M.5 0v29" stroke="#444a52" /></svg>
      </TrayItem>
    </Tray>
  </Taskbar>
);

const App = () => (
  <Screen>
    <GlobalStyle />
    <TitleBar />
    <Ribbon>
      <ClipboardGroup />
      <FontGroup />
      <ParagraphGroup />
      <StylesGroup />
      <EditingGroup />
      <RibbonEnd>
        <svg width="7" height="4" viewBox="0 0 7 4"><path d="M.5 3.500l3-3 3 3" fill="none" stroke="#555" /></svg>
      </RibbonEnd>
    </Ribbon>
    <DocumentArea />
    <Status />
    <WindowsTaskbar />
  </Screen>
);

export default App;
